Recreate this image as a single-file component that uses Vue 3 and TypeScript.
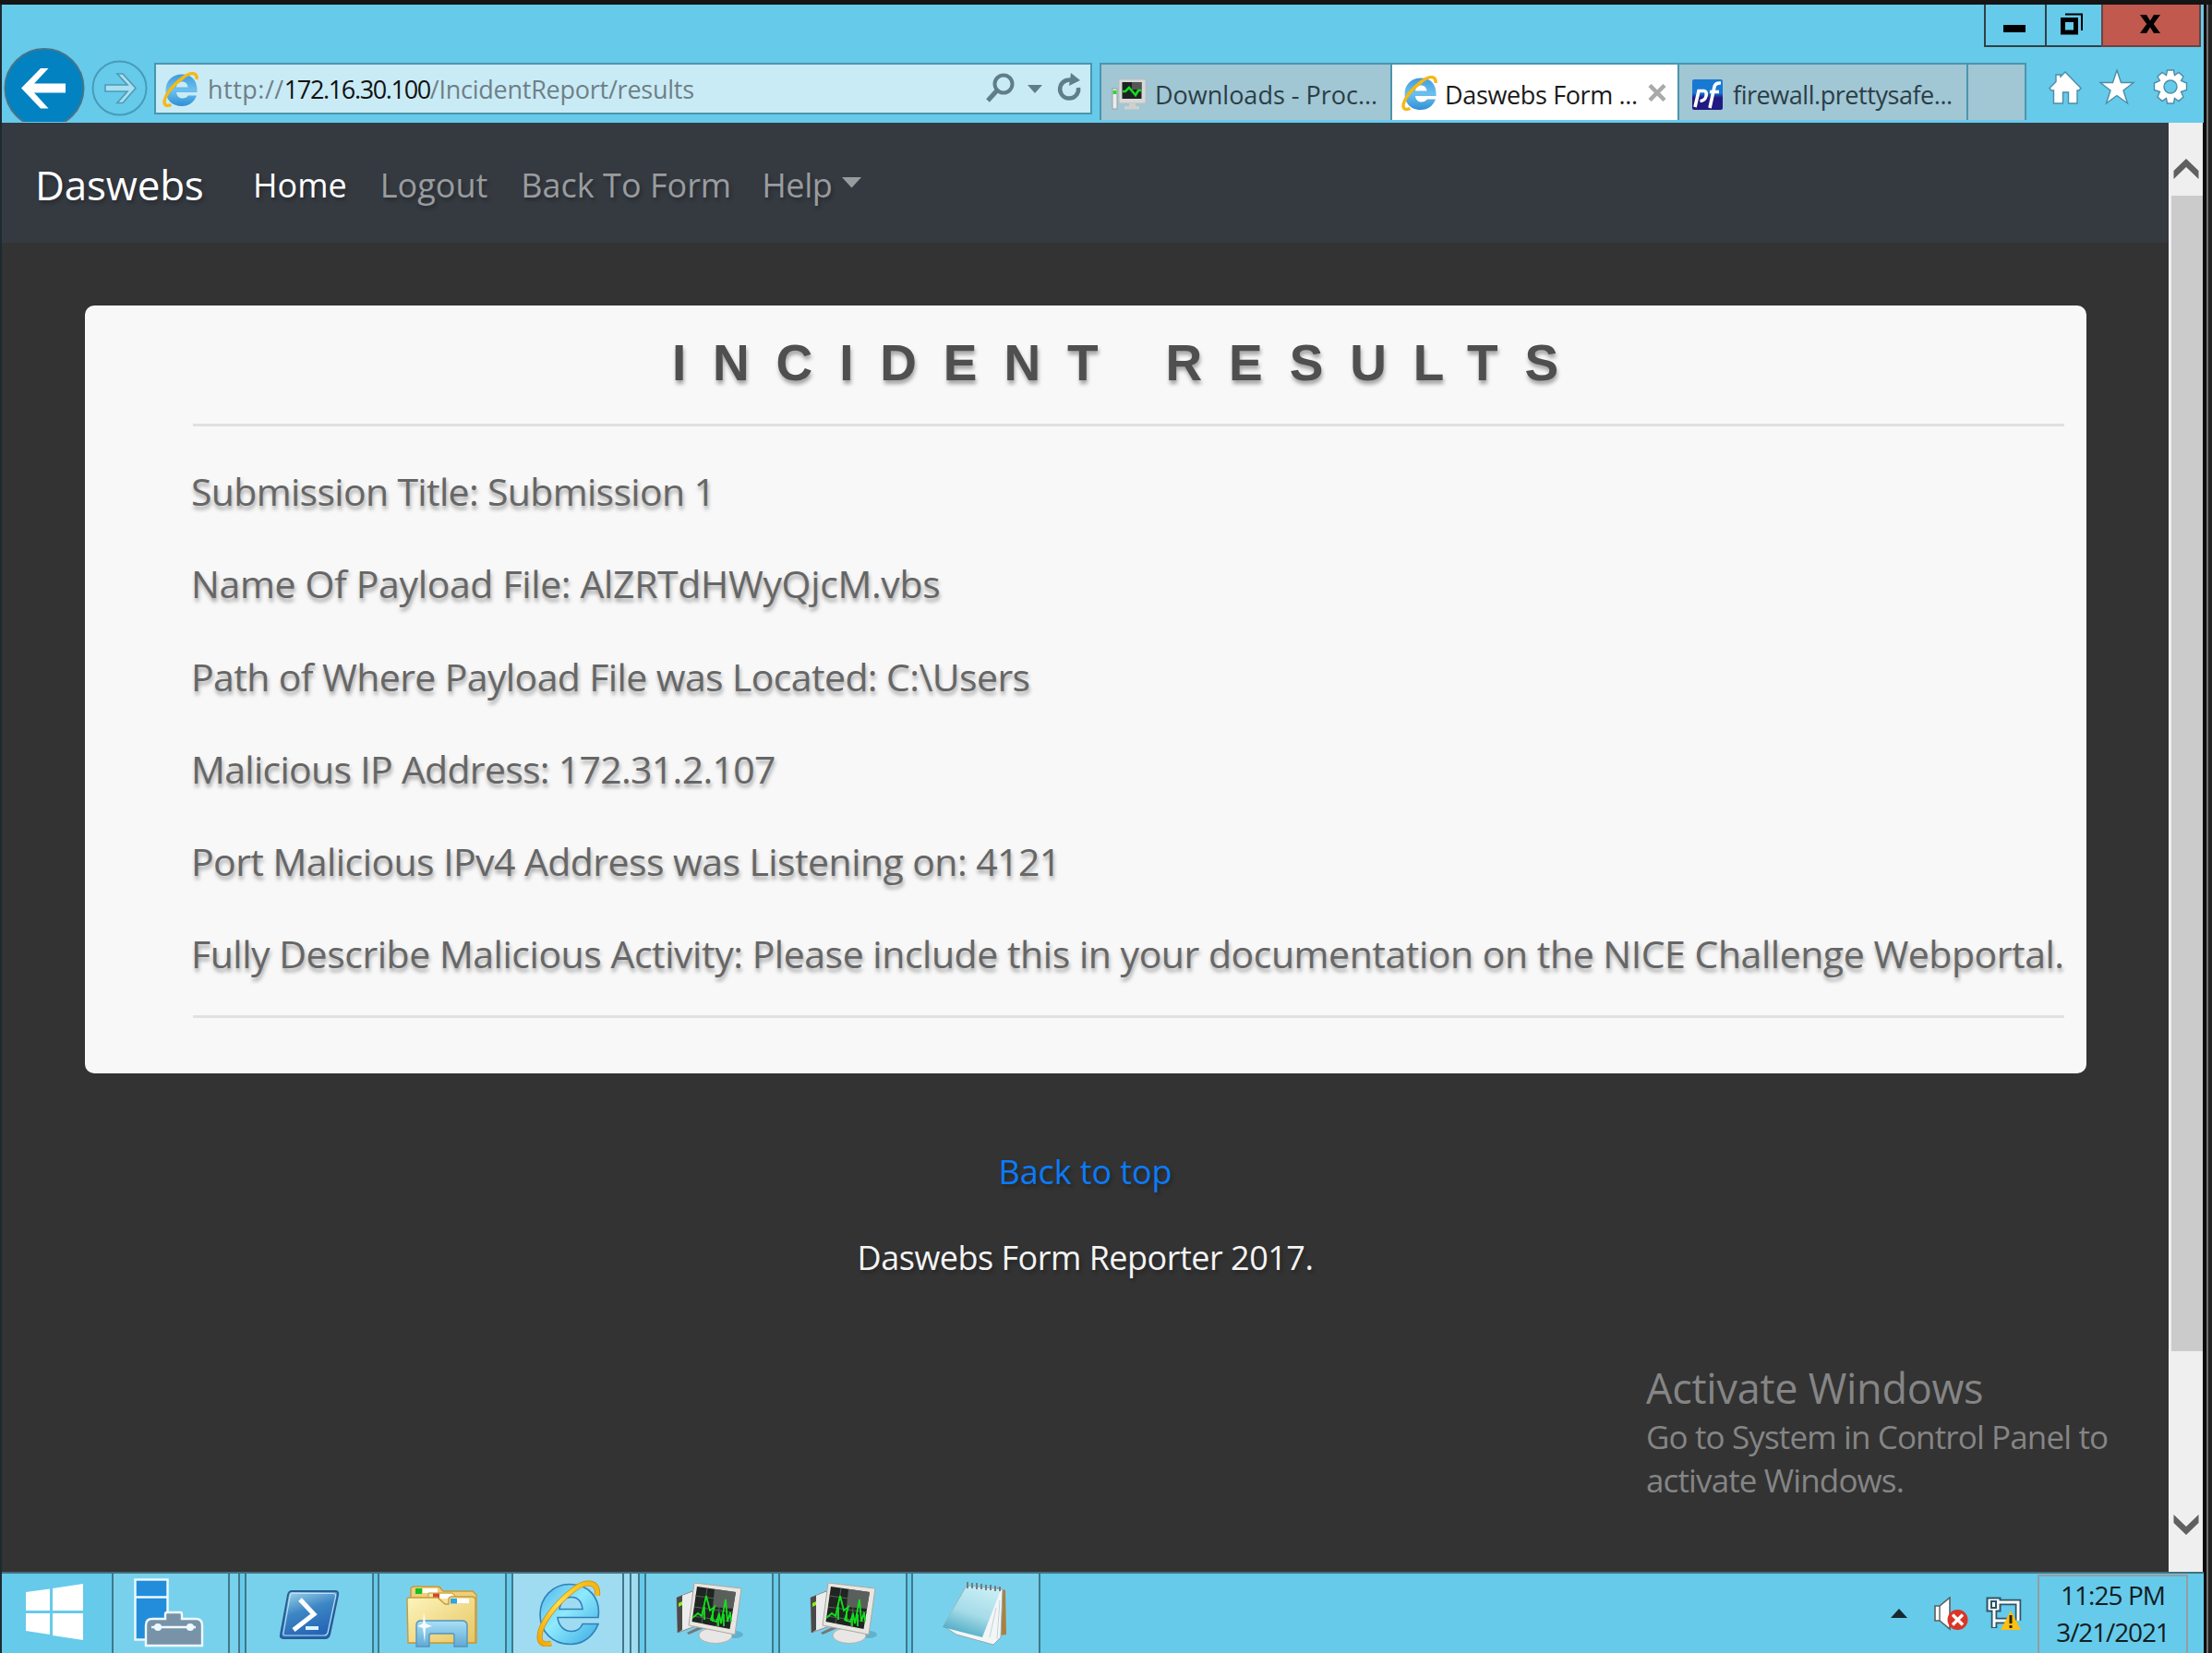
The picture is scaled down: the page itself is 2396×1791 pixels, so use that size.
<script setup lang="ts">
interface ResultLine {
  label: string
  value: string
  tracking: number
}

const results: ResultLine[] = [
  { label: 'Submission Title', value: 'Submission 1', tracking: -0.68 },
  { label: 'Name Of Payload File', value: 'AlZRTdHWyQjcM.vbs', tracking: -0.36 },
  { label: 'Path of Where Payload File was Located', value: 'C:\\Users', tracking: -0.62 },
  { label: 'Malicious IP Address', value: '172.31.2.107', tracking: -0.71 },
  { label: 'Port Malicious IPv4 Address was Listening on', value: '4121', tracking: -0.57 },
  {
    label: 'Fully Describe Malicious Activity',
    value: 'Please include this in your documentation on the NICE Challenge Webportal.',
    tracking: -0.475,
  },
]

const links = ['Home', 'Logout', 'Back To Form']
</script>

<template>
  <div class="screen">
    <!-- shared icon shapes -->
    <svg class="defs" width="0" height="0">
      <defs>
        <linearGradient id="ieBody" x1="0" y1="0" x2="1" y2="1">
          <stop offset="0" stop-color="#4fb4e8" />
          <stop offset=".45" stop-color="#8eeafd" />
          <stop offset="1" stop-color="#3aa9e4" />
        </linearGradient>
        <linearGradient id="ieSmall" x1="0" y1="0" x2="0" y2="1">
          <stop offset="0" stop-color="#3f9bdc" />
          <stop offset=".5" stop-color="#6cc0ee" />
          <stop offset="1" stop-color="#2f8fd4" />
        </linearGradient>
        <linearGradient id="ieRing" x1="1" y1="0" x2="0" y2="1">
          <stop offset="0" stop-color="#f3b50c" />
          <stop offset=".5" stop-color="#ffdf4a" />
          <stop offset="1" stop-color="#f0a808" />
        </linearGradient>
        <linearGradient id="psBody" x1="0" y1="0" x2="0.4" y2="1">
          <stop offset="0" stop-color="#a9dcef" />
          <stop offset=".5" stop-color="#3d86c4" />
          <stop offset="1" stop-color="#2565b6" />
        </linearGradient>
        <linearGradient id="folder" x1="0" y1="0" x2="1" y2="1">
          <stop offset="0" stop-color="#fdf5bd" />
          <stop offset="1" stop-color="#e6c561" />
        </linearGradient>
        <linearGradient id="pad" x1=".6" y1="0" x2=".2" y2="1">
          <stop offset="0" stop-color="#c7edf4" />
          <stop offset=".5" stop-color="#a5dbe8" />
          <stop offset="1" stop-color="#3fa3bd" />
        </linearGradient>
        <linearGradient id="glass" x1="0" y1="0" x2="0" y2="1">
          <stop offset="0" stop-color="#a9e0f6" />
          <stop offset="1" stop-color="#5fa9d6" />
        </linearGradient>
        <linearGradient id="pf" x1="0" y1="0" x2="0" y2="1">
          <stop offset=".45" stop-color="#1779d2" />
          <stop offset=".6" stop-color="#211a82" />
        </linearGradient>
      </defs>
      <symbol id="ie" viewBox="0 0 70 72">
        <path
          d="M67 41H23C24 50 30 56 38 56C44 56 48 53 50 48H67C62 61 51 70 37 70C18 70 4 57 4 38C4 19 18 5 36 5C57 5 70 20 67 41ZM25 32H50C49 24 45 19 38 19C31 19 26 24 25 32Z"
          fill="url(#ieBody)" stroke="#2f7fb8" stroke-width="1.6" fill-rule="evenodd" />
        <path d="M66 17C68 2 54 0 40 11C21 26 3 48 3.500 63C4 70 10 71 16 69" fill="none" stroke="#cf8f10" stroke-width="6" />
        <path d="M66 17C68 2 54 0 40 11C21 26 3 48 3.500 63C4 70 10 71 16 69" fill="none" stroke="url(#ieRing)" stroke-width="4.400" />
      </symbol>
      <symbol id="ie-small" viewBox="0 0 39 39">
        <path
          d="M37.500 23H15C15.500 27 18 29.500 21.500 29.500C24.500 29.500 26.500 28.500 28 26.500H37C34.500 33.500 28.500 38 21 38C11 38 3.500 31.500 3.500 21C3.500 10.500 11 3.500 21 3.500C32 3.500 38.500 11 37.500 23ZM15 17.500H27.500C27 13.500 24.500 11.500 21.500 11.500C18 11.500 15.500 13.500 15 17.500Z"
          fill="url(#ieSmall)" fill-rule="evenodd" />
        <path d="M37 9C38 1.500 31 0.500 23 6.500C11 15 2 27 2 34C2.500 38 6 38 9.500 36.500" fill="none" stroke="#f5b916" stroke-width="3.400" />
      </symbol>
      <symbol id="monitor" viewBox="0 0 74 66">
        <path d="M1 16L18 9L24 46L2 54Z" fill="#e3e3e3" stroke="#8c8c8c" />
        <path d="M1 16L7 13.500V51L2 54Z" fill="#4a4a4a" />
        <path d="M7 14L18 10V46L7 51Z" fill="#ececec" />
        <path d="M3 22L7 20V24L3 26Z" fill="#8df01a" />
        <path d="M12 54L28 46L30 49L14 56Z" fill="#777" />
        <ellipse cx="64" cy="56" rx="9" ry="4" fill="#4f9fb8" opacity=".6" />
        <path d="M36 46L52 48L52 57H36Z" fill="#c9c9c9" />
        <ellipse cx="43" cy="57" rx="18" ry="8.500" fill="#e9e7e5" stroke="#b4b2b0" />
        <path d="M20 0L71 6L64 56L14 46Z" fill="#e9e6e2" stroke="#aaa7a2" />
        <path d="M23 4L65 10L58.500 50L17.500 42Z" fill="#1f2520" />
        <path d="M42 6.700L65 10L62 28L40 26Z" fill="#6a6e6b" opacity=".8" />
        <path d="M21 14L63 20M20 26L62 32M18 36L60 42M34 6L28 44M50 8L44 47" stroke="#56605a" fill="none" />
        <path d="M18 38L24 33L28 36L33 14L37 30L42 26L38 40L44 42L47 34L49 44L54 18L56 42L59 32L60 42" fill="none" stroke="#12df1d" stroke-width="1.800" />
        <path d="M31 26V40M40 30V42M46 38V47M52 34V47" stroke="#12df1d" stroke-width="1.800" />
      </symbol>
    </svg>

    <div class="bezel"></div>
    <div class="window">
      <header class="chrome">
        <div class="titlebar">
          <button class="wb min"><svg width="24" height="8"><rect width="24" height="8" /></svg></button>
          <button class="wb max">
            <svg width="26" height="24" viewBox="0 0 26 24">
              <path d="M6 1.500H24V19" fill="none" stroke="#000" stroke-width="2" />
              <path d="M1 5H20V23.500H1ZM6 10V18.500H15V10Z" fill="#000" fill-rule="evenodd" />
            </svg>
          </button>
          <button class="wb close">
            <svg width="24" height="20" viewBox="0 0 24 20">
              <path d="M1 0H8L12 6.500L16 0H23L15.800 10L23 20H16L12 13.500L8 20H1L8.200 10Z" />
            </svg>
          </button>
        </div>

        <div class="toolbar">
          <svg class="navbtns" width="160" height="80" viewBox="0 0 160 80">
            <circle cx="45" cy="43.500" r="42.500" fill="#0382c2" stroke="#45758a" stroke-width="2" />
            <path d="M20 43.500L41 22H49.500L34 38.500H68V48.500H34L49.500 65.500H41Z" fill="#fff" />
            <circle cx="126.500" cy="43.500" r="29" fill="none" stroke="#469cb8" stroke-width="2" />
            <path d="M144 43.500L130 59.500H124L135 47H111V40H135L124 28H130Z" fill="#a8e0f2" stroke="#4f9ab5" stroke-width="1.600" />
          </svg>
          <div class="address">
            <svg class="ie-sm" width="39" height="39"><use href="#ie-small" /></svg>
            <span class="url"><span class="scheme">http://</span><span class="host">172.16.30.100</span><span class="path">/IncidentReport/results</span></span>
            <svg class="addr-icons" width="106" height="36" viewBox="0 0 106 36">
              <circle cx="20" cy="13" r="9.500" fill="none" stroke="#5f7e89" stroke-width="4" />
              <path d="M13 20L3 31" stroke="#5f7e89" stroke-width="5" />
              <path d="M46 14H62L54 23Z" fill="#5f7e89" />
              <path d="M97 10.500A10 10 0 1 0 101 17" fill="none" stroke="#5f7e89" stroke-width="4.500" />
              <path d="M93 1L103 9L91 15Z" fill="#5f7e89" />
            </svg>
          </div>
          <nav class="tabs">
            <div class="tab t1">
              <svg width="38" height="34" viewBox="0 0 38 34">
                <rect x="1" y="11" width="5" height="22" fill="#ececec" stroke="#96a2a6" />
                <rect x="1.500" y="13" width="4" height="4" fill="#2fd52f" />
                <rect x="8" y="1" width="29" height="26" fill="#d8d8d8" stroke="#b9bcbd" />
                <rect x="11.500" y="4" width="21" height="18" fill="#1c2220" />
                <path d="M22 4H32.500V12H22Z" fill="#555" />
                <path d="M12 14H15L19 10L26 18L29 13H32.500" fill="none" stroke="#16d722" stroke-width="2.600" />
                <path d="M19 27H26V30H30V33.500H14V30H19Z" fill="#d0d0d0" />
              </svg>
              <span>Downloads - Proc...</span>
            </div>
            <div class="tab t2">
              <svg width="39" height="39"><use href="#ie-small" /></svg>
              <span>Daswebs Form ...</span>
              <svg class="x" width="20" height="19" viewBox="0 0 20 19"><path d="M2 1.500L18 17.500M18 1.500L2 17.500" stroke="#a9a9a9" stroke-width="4.500" /></svg>
            </div>
            <div class="tab t3">
              <svg width="33" height="33" viewBox="0 0 33 33">
                <rect width="33" height="33" rx="2" fill="url(#pf)" />
                <path d="M3 30L7 12.500H13Q16 13 15 18T8.500 23.500M19 31L24 8Q25 3.500 31 4M19 13.500H29" fill="none" stroke="#fff" stroke-width="3.600" />
              </svg>
              <span>firewall.prettysafe...</span>
            </div>
            <div class="tab t4"></div>
          </nav>
          <svg class="tools" width="152" height="40" viewBox="0 0 152 40">
            <g fill="#fff" stroke="#4b8da6" stroke-width="1.400">
              <path d="M18 3L35 20.500L33 23H31V37H21.500V25H15.500V37H5.500V23H3L1 20.500L8 13.500V6H13V8Z" />
              <path d="M74 1L78.500 14.500H92L81 23L85.500 37L74 28.500L62.500 37L67 23L56 14.500H69.500Z" />
              <path fill-rule="evenodd"
                d="M128.500 1H135.500L136.500 6.500L141 3.500L146 8L143.500 12.500L149.500 15V22.500L143.500 24.500L146 30L141 34.500L136.500 31.500L135.500 37H128.500L127.500 31.500L123 34.500L118 30L120.500 24.500L114.500 22.500V15L120.500 12.500L118 8L123 3.500L127.500 6.500ZM132 12A7 7 0 1 0 132 26A7 7 0 1 0 132 12Z" />
            </g>
          </svg>
        </div>
      </header>

      <div class="viewport">
        <main class="page">
          <nav class="navbar">
            <a class="brand">Daswebs</a>
            <a v-for="(l, i) in links" :key="l" class="link" :class="{ current: i === 0 }">{{ l }}</a>
            <a class="link help">Help</a>
            <svg class="caret" width="22" height="12"><path d="M0 0H21L10.500 11.500Z" fill="#999c9f" /></svg>
          </nav>

          <section class="card">
            <h1>INCIDENT RESULTS</h1>
            <hr />
            <div class="lines">
              <p v-for="r in results" :key="r.label" :style="{ letterSpacing: r.tracking + 'px' }">{{ r.label }}: {{ r.value }}</p>
            </div>
            <hr />
          </section>

          <footer class="foot">
            <a class="top">Back to top</a>
            <p>Daswebs Form Reporter 2017.</p>
          </footer>

          <aside class="watermark">
            <strong>Activate Windows</strong>
            <span>Go to System in Control Panel to<br />activate Windows.</span>
          </aside>
        </main>

        <div class="scrollbar">
          <svg class="up" width="28" height="22"><path d="M14 0L27.500 13V22L14 9L0.500 22V13Z" fill="#606060" /></svg>
          <div class="thumb"></div>
          <svg class="down" width="28" height="22"><path d="M14 22L27.500 9V0L14 13L0.500 0V9Z" fill="#606060" /></svg>
        </div>
      </div>

      <footer class="taskbar">
        <div class="start">
          <svg width="64" height="64" viewBox="0 0 64 64" fill="#fff">
            <path d="M1 10L27 6.500V30H1ZM30 6L63 1V30H30ZM1 33H27V56L1 52ZM30 33H63V62L30 57Z" />
          </svg>
        </div>
        <div class="task server">
          <svg width="77" height="76" viewBox="0 0 77 76">
            <g stroke="#eefaff" stroke-width="2.400">
              <rect x="2.500" y="2.500" width="35" height="65" fill="#238ddb" />
              <path d="M2 21.500H38" />
              <path d="M35 45V40Q35 38 37 38H51Q53 38 53 40V45H68Q75 45 75 52V74H14V52Q14 45 21 45Z" fill="#7893a8" />
              <path d="M20 54H68" />
            </g>
            <circle cx="27" cy="54" r="4" fill="#eefaff" />
            <circle cx="62" cy="54" r="4" fill="#eefaff" />
          </svg>
        </div>
        <div class="edge e1"></div>
        <div class="task g5">
          <svg width="66" height="54" viewBox="0 0 66 54">
            <path d="M14 1H61Q65 1 64 5L55 48Q54 52 50 52H5Q1 52 2 48L10 5Q11 1 14 1Z" fill="url(#psBody)" stroke="#2a5c95" stroke-width="2" />
            <path d="M15 3.500H59Q62 3.500 61.500 7L53 46Q52 49 49 49H7Q4 49 5 46L12 7Q12.500 3.500 15 3.500Z" fill="none" stroke="#b9e2f3" stroke-width="1.200" />
            <path d="M23 10L38 26L16 43" fill="none" stroke="#fff" stroke-width="5" />
            <path d="M29 41H43" stroke="#dff2fb" stroke-width="4" />
          </svg>
        </div>
        <div class="task g4 files">
          <svg width="78" height="68" viewBox="0 0 78 68">
            <path d="M5 20V3Q6 1 9 1H34Q37 1 38 4L40 6H72L76 10V62H3V20Z" fill="#ecd07a" stroke="#c69a3c" stroke-width="1.400" />
            <path d="M18 3H34V8H18Z" fill="#fff" /><rect x="10" y="3" width="7" height="6" fill="#13c224" />
            <path d="M24 8H50L54 12V22H24Z" fill="#f5e19a" stroke="#c69a3c" />
            <path d="M36 9H50V14H36Z" fill="#fff" /><rect x="29" y="8.500" width="7" height="6" fill="#d4482a" />
            <path d="M1 15Q1 13 4 13H34L42 20H46V15Q46 12 50 12H71Q75 12 75 16V62H2Z" fill="url(#folder)" stroke="#c69a3c" stroke-width="1.400" />
            <path d="M54 14H68V19H54Z" fill="#fff" /><rect x="48" y="14" width="7" height="5.500" fill="#2fa5e4" />
            <path d="M11 66V43Q11 38 16 38H60Q66 38 66 43V66H52V54Q52 52 50 52H27Q25 52 25 54V66Z" fill="url(#glass)" stroke="#5794bd" stroke-width="1.400" />
            <path d="M19 28L21 41L28 44L21 46L20 62L18 46L12 44L18 41Z" fill="#fff" opacity=".9" />
          </svg>
        </div>
        <div class="task g5 active">
          <svg width="70" height="73"><use href="#ie" /></svg>
        </div>
        <div class="edge e2"></div>
        <div class="edge e3"></div>
        <div class="task g5 mon"><svg width="74" height="66"><use href="#monitor" /></svg></div>
        <div class="task g5 mon"><svg width="74" height="66"><use href="#monitor" /></svg></div>
        <div class="task g4 note">
          <svg width="72" height="70" viewBox="0 0 72 70">
            <path d="M60 6L69 9L70 57L62 58Z" fill="#a9813f" />
            <path d="M27 4L66 8L64 60L56 68L16 57L2 48Z" fill="#f3f6f7" stroke="#93a7ad" />
            <path d="M27 5L64 9L44 60L1 49Z" fill="url(#pad)" />
            <path d="M59 28L52 60M63 20L60 62" stroke="#c7d2d5" />
            <path d="M28 0V7M33 1V7M38 1V8M43 2V8M48 3V9M53 3V9M58 4V10M63 5V10" stroke="#6c7f86" stroke-width="2" />
          </svg>
        </div>

        <div class="tray">
          <svg class="arrow" width="18" height="10"><path d="M9 0L18 10H0Z" fill="#16282e" /></svg>
          <svg class="speaker" width="38" height="38" viewBox="0 0 38 38">
            <path d="M1 10H6L17 1V35L6 26H1Z" fill="#fff" stroke="#5d5d5d" stroke-width="1.600" />
            <path d="M6 10V26" stroke="#5d5d5d" stroke-width="1.400" />
            <circle cx="25.500" cy="25" r="11" fill="#dc3426" />
            <path d="M20 19.500L31 30.500M31 19.500L20 30.500" stroke="#fff" stroke-width="3.400" />
          </svg>
          <svg class="net" width="40" height="38" viewBox="0 0 40 38">
            <path d="M14 6H35V26M10 26H24M9 14V34" fill="none" stroke="#2d5566" stroke-width="6.500" />
            <rect x="1.500" y="1.500" width="14" height="14" fill="#fff" stroke="#2d5566" stroke-width="2" />
            <path d="M14 6H35V26M10 26H24M9 14V33" fill="none" stroke="#fff" stroke-width="3" />
            <rect x="6" y="5" width="5" height="7" fill="none" stroke="#2d5566" stroke-width="2" />
            <path d="M27 15L38 36H16Z" fill="#fcbf12" />
            <path d="M27 20V29M27 31V34" stroke="#2c2300" stroke-width="3" />
          </svg>
          <div class="clock"><span class="time">11:25 PM</span><span class="date">3/21/2021</span></div>
        </div>
      </footer>
    </div>
  </div>
</template>

<style>
body { background: #222; overflow: hidden; }
</style>

<style scoped>
.screen { width: 2396px; height: 1791px; background: #222; font-family: "Open Sans", "Noto Sans", sans-serif; overflow: hidden; display: flex; flex-direction: column; }
.defs { position: absolute; }
.bezel { height: 5px; background: #151515; flex: none; }
.window { box-sizing: border-box; width: 2392px; height: 1786px; flex: none; border-left: 2px solid #1c2a30; border-right: 2px solid #707070; background: #0c0c0c; padding-right: 3px; display: flex; flex-direction: column; }
svg { display: block; flex: none; }

.chrome { height: 128px; background: #66caea; display: flex; flex-direction: column; flex: none; }
.titlebar { height: 47px; display: flex; justify-content: flex-end; padding-right: 3px; }
.wb { box-sizing: border-box; height: 46px; background: none; border: 2px solid #333f44; border-top: 0; border-left-width: 2px; border-right: 0; padding: 0; display: flex; justify-content: center; align-items: center; }
.min { width: 66px; padding: 8px 2px 0 0; }
.max { width: 61px; padding: 0 5px 2px 0; }
.close { width: 108px; background: #c1594f; border-right: 2px solid #6c4340; border-color: #6c4340; padding: 0 3px 2px 0; }

.toolbar { height: 81px; display: flex; }
.navbtns { margin-left: 1px; height: 80px; }
.address { box-sizing: border-box; width: 1016px; height: 56px; margin: 16px 0 0 4px; border: 2px solid #4a96ad; background: #c9ebf6; display: flex; align-items: center; padding: 0 8px 0 7px; }
.url { font-size: 27px; line-height: 54px; margin: 0 auto 0 10px; color: #6f7f86; white-space: pre; padding-top: 1px; }
.scheme { letter-spacing: .5px; }
.host { color: #111; letter-spacing: -1.35px; }
.path { letter-spacing: -.25px; }
.tabs { display: flex; margin: 16px 0 0 8px; height: 63px; }
.tab { box-sizing: border-box; display: flex; align-items: center; height: 62px; border: 2px solid #4a96ad; border-bottom: 0; border-right: 0; background: #a1c6d4; font-size: 27px; color: #2b3e46; white-space: pre; line-height: 62px; }
.tab span { padding-top: 5px; }
.t1 { width: 315px; padding-left: 11px; }
.t1 span { margin-left: 9px; }
.t1 svg { margin-top: 4px; }
.t2 { width: 311px; padding-left: 10px; background: #fff; color: #1a1a1a; letter-spacing: -.35px; }
.t2 span { margin-left: 8px; }
.t2 .x { margin: 0 0 0 11px; }
.t3 { width: 313px; padding-left: 14px; letter-spacing: -.45px; }
.t3 span { margin-left: 11px; }
.t3 svg { margin-top: 4px; }
.t4 { width: 65px; border-right: 2px solid #4a96ad; }
.tools { margin: 23px 0 0 24px; }

.viewport { height: 1570px; display: flex; flex: none; }
.page { width: 2347px; background: #333; position: relative; }
.navbar { box-sizing: border-box; height: 130px; background: #353a41; display: flex; align-items: center; padding-left: 36px; text-shadow: 2px 3px 4px rgba(0, 0, 0, .3); }
.brand { font-size: 44px; color: #fff; width: 236px; padding-top: 3px; letter-spacing: -.2px; }
.link { font-size: 36px; color: #999c9f; padding-top: 5px; margin-right: 36px; letter-spacing: 0; }
.link.current { color: #fff; }
.help { margin-left: -3px; letter-spacing: -.4px; }
.caret { margin: 0 0 0 -25px; }

.card { box-sizing: border-box; width: 2168px; height: 832px; margin: 68px 0 0 90px; padding: 32px 24px 0 117px; background: #f8f8f8; border-radius: 10px; color: #666; }
.card h1 { margin: 0 0 36px; font: bold 55px/60px "Liberation Sans", Arial, sans-serif; letter-spacing: 28.85px; text-align: center; color: #4f4f4f; text-shadow: 1px 4px 4px rgba(0, 0, 0, .35); }
.card hr { margin: 0; height: 3px; border: 0; background: #e1e1e1; }
.lines { padding: 20px 0 16px; margin-left: -2px; }
.lines p { margin: 0; height: 100.25px; line-height: 100.25px; font-size: 41px; white-space: nowrap; text-shadow: 1px 4px 4px rgba(0, 0, 0, .35); }

.foot { padding-top: 77px; display: flex; flex-direction: column; align-items: center; font-size: 36px; text-shadow: 2px 3px 4px rgba(0, 0, 0, .3); }
.top { color: #0a7bfb; line-height: 60px; letter-spacing: -.1px; }
.foot p { margin: 33px 0 0; line-height: 60px; color: #f4f4f4; letter-spacing: -.5px; }
.watermark { position: absolute; left: 1781px; top: 1342px; color: #858585; display: flex; flex-direction: column; }
.watermark strong { font-weight: 400; font-size: 45px; line-height: 58px; letter-spacing: -.25px; }
.watermark span { font-size: 35px; line-height: 47px; letter-spacing: -.87px; white-space: nowrap; }

.scrollbar { width: 37px; background: #efefef; display: flex; flex-direction: column; align-items: center; }
.up { margin-top: 39px; }
.thumb { width: 34px; height: 1252px; margin: 18px 0 0 2px; background: #cbcbcb; }
.down { margin-top: 177px; }

.taskbar { height: 88px; box-sizing: border-box; background: #66caea; border-top: 2px solid #44717f; display: flex; flex: none; }
.start { width: 119px; display: flex; }
.start svg { margin: 10px 0 0 25px; }
.task { box-sizing: border-box; width: 140px; height: 86px; background: #78d1ec; border: 2px solid #40788a; border-width: 0 2px; display: flex; justify-content: center; padding-top: 18px; }
.server { width: 128px; padding: 4px 0 0 21px; justify-content: flex-start; }
.edge { box-sizing: border-box; border-right: 2px solid #40788a; background: #78d1ec; }
.e1 { width: 11px; }
.e2 { width: 8px; background: #a0dcf1; }
.e3 { width: 9px; background: #a0dcf1; }
.g5 { margin-left: 5px; }
.g4 { margin-left: 4px; }
.files { padding-top: 13px; }
.active { width: 122px; background: #a0dcf1; padding: 6px 0 0 1px; }
.mon { padding: 10px 0 0 2px; }
.note { padding: 9px 2px 0 0; }

.tray { margin-left: auto; display: flex; padding-right: 17px; }
.arrow { margin: 38px 29px 0 0; }
.speaker { margin: 25px 18px 0 0; }
.net { margin: 25px 16px 0 0; }
.clock { box-sizing: border-box; width: 163px; height: 86px; margin-top: 1px; border: 2px solid #939ea2; border-bottom: 0; font-size: 28px; line-height: 40px; color: #111d22; display: flex; flex-direction: column; align-items: center; white-space: nowrap; }
.time { letter-spacing: -.95px; }
.date { letter-spacing: -1.15px; }
</style>
